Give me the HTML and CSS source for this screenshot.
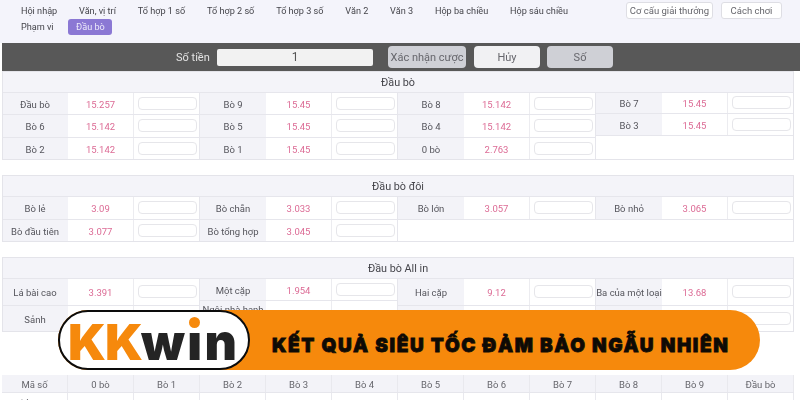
FILE: index.html
```html
<!DOCTYPE html>
<html lang="vi">
<head>
<meta charset="utf-8">
<title>KKwin</title>
<link rel="stylesheet" href="styles.css">
</head>
<body>
<div class="page">
  <header class="nav">
    <div class="tabs">
      <div class="tab-line">
        <a class="tab">Hội nhập</a><a class="tab">Văn, vị trí</a><a class="tab">Tổ hợp 1 số</a><a class="tab">Tổ hợp 2 số</a><a class="tab">Tổ hợp 3 số</a><a class="tab">Văn 2</a><a class="tab">Văn 3</a><a class="tab">Hộp ba chiều</a><a class="tab">Hộp sáu chiều</a>
      </div>
      <div class="tab-line">
        <a class="tab">Phạm vi</a><a class="tab active">Đầu bò</a>
      </div>
    </div>
    <div class="nav-actions">
      <button class="nav-btn">Cơ cấu giải thưởng</button>
      <button class="nav-btn">Cách chơi</button>
    </div>
  </header>

  <div class="betbar">
    <span class="bet-label">Số tiền</span>
    <div class="bet-input">1</div>
    <button class="bet-btn grey confirm">Xác nhận cược</button>
    <button class="bet-btn light">Hủy</button>
    <button class="bet-btn grey">Số</button>
  </div>

  <section class="panel first">
    <div class="panel-title">Đầu bò</div>
    <div class="cols">
      <div class="col">
        <div class="row"><span class="lbl">Đầu bò</span><span class="odd">15.257</span><span class="inp"><i></i></span></div>
        <div class="row"><span class="lbl">Bò 6</span><span class="odd">15.142</span><span class="inp"><i></i></span></div>
        <div class="row"><span class="lbl">Bò 2</span><span class="odd">15.142</span><span class="inp"><i></i></span></div>
      </div>
      <div class="col">
        <div class="row"><span class="lbl">Bò 9</span><span class="odd">15.45</span><span class="inp"><i></i></span></div>
        <div class="row"><span class="lbl">Bò 5</span><span class="odd">15.45</span><span class="inp"><i></i></span></div>
        <div class="row"><span class="lbl">Bò 1</span><span class="odd">15.45</span><span class="inp"><i></i></span></div>
      </div>
      <div class="col">
        <div class="row"><span class="lbl">Bò 8</span><span class="odd">15.142</span><span class="inp"><i></i></span></div>
        <div class="row"><span class="lbl">Bò 4</span><span class="odd">15.142</span><span class="inp"><i></i></span></div>
        <div class="row"><span class="lbl">0 bò</span><span class="odd">2.763</span><span class="inp"><i></i></span></div>
      </div>
      <div class="col">
        <div class="row short"><span class="lbl">Bò 7</span><span class="odd">15.45</span><span class="inp"><i></i></span></div>
        <div class="row short"><span class="lbl">Bò 3</span><span class="odd">15.45</span><span class="inp"><i></i></span></div>
      </div>
    </div>
  </section>

  <section class="panel">
    <div class="panel-title">Đầu bò đôi</div>
    <div class="cols">
      <div class="col">
        <div class="row"><span class="lbl">Bò lẻ</span><span class="odd">3.09</span><span class="inp"><i></i></span></div>
        <div class="row"><span class="lbl">Bò đầu tiên</span><span class="odd">3.077</span><span class="inp"><i></i></span></div>
      </div>
      <div class="col">
        <div class="row"><span class="lbl">Bò chẵn</span><span class="odd">3.033</span><span class="inp"><i></i></span></div>
        <div class="row"><span class="lbl">Bò tổng hợp</span><span class="odd">3.045</span><span class="inp"><i></i></span></div>
      </div>
      <div class="col">
        <div class="row"><span class="lbl">Bò lớn</span><span class="odd">3.057</span><span class="inp"><i></i></span></div>
      </div>
      <div class="col">
        <div class="row"><span class="lbl">Bò nhỏ</span><span class="odd">3.065</span><span class="inp"><i></i></span></div>
      </div>
    </div>
  </section>

  <section class="panel">
    <div class="panel-title">Đầu bò All in</div>
    <div class="cols">
      <div class="col">
        <div class="row tall"><span class="lbl">Lá bài cao</span><span class="odd">3.391</span><span class="inp"><i></i></span></div>
        <div class="row tall"><span class="lbl">Sảnh</span><span class="odd"></span><span class="inp"></span></div>
      </div>
      <div class="col">
        <div class="row low"><span class="lbl">Một cặp</span><span class="odd">1.954</span><span class="inp"><i></i></span></div>
        <div class="row high"><span class="lbl wrap">Ngôi nhà hạnh phúc</span><span class="odd"></span><span class="inp"></span></div>
      </div>
      <div class="col">
        <div class="row tall"><span class="lbl">Hai cặp</span><span class="odd">9.12</span><span class="inp"><i></i></span></div>
        <div class="row tall"><span class="lbl"></span><span class="odd"></span><span class="inp"></span></div>
      </div>
      <div class="col">
        <div class="row tall"><span class="lbl">Ba của một loại</span><span class="odd">13.68</span><span class="inp"><i></i></span></div>
        <div class="row tall"><span class="lbl"></span><span class="odd"></span><span class="inp"><i></i></span></div>
      </div>
    </div>
  </section>

  <section class="results">
    <div class="res-row head">
      <span>Mã số</span><span>0 bò</span><span>Bò 1</span><span>Bò 2</span><span>Bò 3</span><span>Bò 4</span><span>Bò 5</span><span>Bò 6</span><span>Bò 7</span><span>Bò 8</span><span>Bò 9</span><span>Đầu bò</span>
    </div>
    <div class="res-row">
      <span>Số lần hiện</span><span>20</span><span>14</span><span>14</span><span>15</span><span>14</span><span>15</span><span>16</span><span>14</span><span>14</span><span>15</span><span>16</span>
    </div>
  </section>
</div>

<aside class="promo">
  <div class="promo-logo"><span class="kk">KK</span><span class="win">w<span class="i">ı<b class="dot"></b></span>n</span></div>
  <p class="promo-text">KẾT QUẢ SIÊU TỐC ĐẢM BẢO NGẪU NHIÊN</p>
</aside>
</body>
</html>
```
FILE: styles.css
```css
* { box-sizing: border-box; }
html, body { margin: 0; width: 800px; height: 400px; overflow: hidden; background: #fff; }
body { position: relative; font-family: Roboto, "Liberation Sans", sans-serif; font-size: 9.5px; color: #55555c; }
.page { height: 400px; overflow: hidden; filter: blur(0.35px); }

.nav { height: 43px; background: #f4f4fb; display: flex; justify-content: space-between; padding-left: 10px; }
.tabs { padding-top: 3px; }
.tab-line { display: flex; height: 16px; }
.tab { height: 16px; line-height: 16px; padding: 0 10.9px; font-size: 9.15px; white-space: nowrap; color: #45454b; }
.tab.active { margin: 0 0 0 4px; padding: 0; width: 44px; text-align: center; background: #8b78d4; border-radius: 3px; color: #ece9fa; }
.nav-actions { display: flex; gap: 8px; padding: 2px 18px 0 0; }
.nav-btn { height: 17px; width: 87px; padding: 0; border: 1px solid #dedee4; border-radius: 3px; background: #fff; font: inherit; color: #66666c; white-space: nowrap; }
.nav-btn:last-child { width: 61px; }

.betbar { margin-left: 2px; height: 28px; background: #585858; display: flex; align-items: center; gap: 8px; padding-left: 174px; }
.bet-label { color: #e4e4e4; font-size: 11px; width: 33px; white-space: nowrap; }
.bet-input { width: 156px; height: 17px; margin-right: 7px; background: #f2f2f2; border-radius: 2px; text-align: center; line-height: 17px; font-size: 12px; color: #555; }
.bet-btn { width: 66px; height: 22px; padding: 0; border: 0; border-radius: 4px; font: inherit; font-size: 11px; color: #66666c; white-space: nowrap; }
.bet-btn.grey { background: #cfd0d6; }
.bet-btn.confirm { width: 78px; }
.bet-btn.light { background: #f1f1f3; margin-right: -1px; }

.panel { width: 792px; margin: 15px 0 0 2px; outline: 1px solid #e4e4ea; outline-offset: -1px; background: #fff; }
.panel.first { margin-top: 0; }
.panel-title { height: 22px; line-height: 23px; background: #f4f4f9; border-bottom: 1px solid #e6e6ec; text-align: center; font-size: 10.8px; color: #45454b; }
.first .panel-title { height: 21.5px; }
.cols { display: flex; }
.col { width: 198px; flex: none; }
.row { height: 22.5px; display: flex; border-bottom: 1px solid #e6e6ec; }
.row.short { height: 21.5px; }
.row.tall { height: 26.5px; }
.row.low { height: 22px; }
.row.high { height: 31px; }
.lbl { width: 66px; flex: none; padding-top: 2px; background: #f3f3f8; display: flex; align-items: center; justify-content: center; text-align: center; color: #55555c; white-space: nowrap; }
.lbl.wrap { white-space: normal; line-height: 12px; padding: 0 1px; }
.odd { width: 66px; flex: none; padding-top: 2px; display: flex; align-items: center; justify-content: center; color: #dc6b95; border-right: 1px solid #ececf0; }
.inp { flex: 1; display: flex; align-items: center; padding: 0 2px 0 4px; border-right: 1px solid #e6e6ec; }
.inp i { display: block; width: 100%; height: 13px; background: #fff; border: 1px solid #e6e6ea; border-radius: 4px; }

.results { margin: 43px 0 0 2px; width: 792px; }
.res-row { display: grid; grid-template-columns: repeat(12, 66px); height: 18px; }
.res-row span { padding-top: 2px; display: flex; align-items: center; justify-content: center; white-space: nowrap; border-right: 1px solid #e9e9ee; }
.res-row.head { background: #f3f3f8; border-bottom: 1px solid #e6e6ec; color: #66666c; }

.promo { position: absolute; left: 58px; top: 310px; width: 702px; height: 60px; background: #f6890c; border-radius: 30px; }
.promo-logo { position: absolute; left: 0; top: 0; width: 192px; height: 60px; padding: 3px 0 0 8px; background: #fff; border: 2.5px solid #0c0c0c; border-radius: 30px; display: flex; align-items: center; font-family: Inter, "Liberation Sans", sans-serif; font-weight: 900; font-size: 50px; line-height: 54px; white-space: nowrap; }
.kk { color: #f6890c; font-size: 50px; letter-spacing: -1px; margin-right: -1px; }
.win { color: #242424; position: relative; letter-spacing: 2.5px; }
.i { position: relative; }
.dot { position: absolute; left: 2px; top: 5px; width: 11px; height: 11px; border-radius: 50%; background: #f6890c; }
.promo-text { position: absolute; left: 214px; top: 0; margin: 0; height: 60px; line-height: 72px; font-family: Inter, "Liberation Sans", sans-serif; font-weight: 900; font-size: 19px; letter-spacing: 1.65px; color: #0e0a05; white-space: nowrap; -webkit-text-stroke: 0.8px #0e0a05; }
```
